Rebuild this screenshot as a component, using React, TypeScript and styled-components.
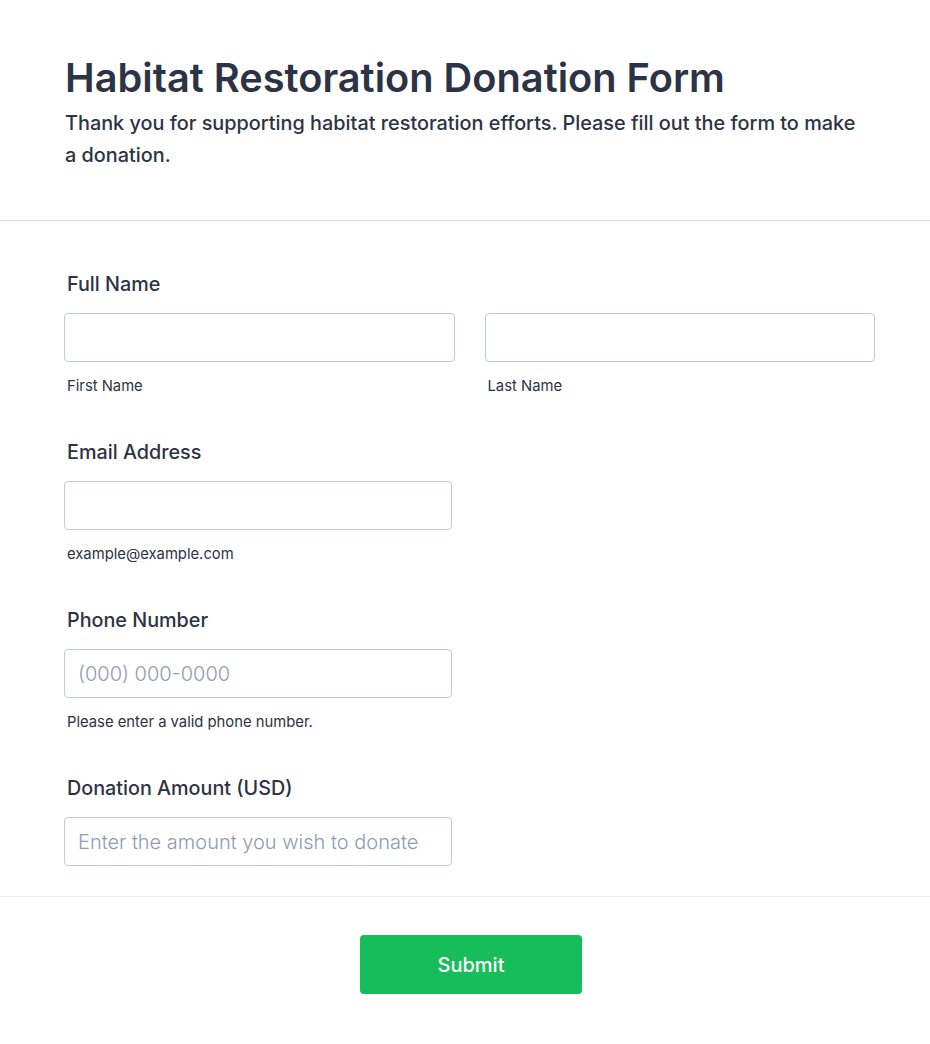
import styled, { createGlobalStyle } from 'styled-components';

const GlobalStyle = createGlobalStyle`
  * {
    box-sizing: border-box;
  }
  body {
    margin: 0;
    background: #ffffff;
    font-family: Inter, "Noto Sans", sans-serif;
    color: #2c3345;
  }
`;

// Styled components
const Page = styled.div`
  width: 930px;
  min-height: 1044px;
  background: #ffffff;
`;

const Header = styled.header`
  padding: 54px 55px 49px 65px;
  border-bottom: 1px solid #d8dae6;
`;

const Title = styled.h1`
  margin: 0;
  font-size: 39.75px;
  line-height: 48px;
  font-weight: 600;
  color: #2c3345;
`;

const Subtitle = styled.p`
  max-width: 798px;
  margin: 5px 0 0;
  font-size: 19.85px;
  line-height: 32px;
  font-weight: 500;
  color: #2c3345;
`;

const FormBody = styled.form`
  padding: 49px 55px 0 64px;
`;

const Field = styled.div<{ $last?: boolean }>`
  display: flex;
  flex-direction: column;
  margin-bottom: ${(p) => (p.$last ? '0' : '42px')};
`;

const Label = styled.label`
  margin: 0 0 15px 3px;
  font-size: 19.75px;
  line-height: 28px;
  font-weight: 500;
  color: #2c3345;
`;

const Row = styled.div`
  display: grid;
  grid-template-columns: 1fr 1fr;
  column-gap: 30px;
`;

const InputWrap = styled.div<{ $half?: boolean }>`
  display: flex;
  flex-direction: column;
  width: ${(p) => (p.$half ? '388px' : '100%')};
`;

const Input = styled.input`
  height: 49px;
  width: 100%;
  padding: 0 13px;
  border: 1px solid #c3cad8;
  border-radius: 4px;
  font-family: Inter, "Noto Sans", sans-serif;
  font-size: 20px;
  color: #2c3345;
  background: #ffffff;
  outline: none;

  &::placeholder {
    color: #8f9bb3;
    font-weight: 300;
  }
`;

const SubLabel = styled.span`
  margin: 14px 0 0 3px;
  font-size: 14.8px;
  line-height: 20px;
  color: #2c3345;
`;

const Footer = styled.div`
  margin-top: 30px;
  border-top: 1px solid #eaebf2;
  padding: 38px 0 50px 12px;
  display: flex;
  justify-content: center;
`;

const SubmitButton = styled.button`
  width: 222px;
  height: 59px;
  border: none;
  border-radius: 4px;
  background-color: #18bd5b;
  color: #ffffff;
  font-family: Inter, "Noto Sans", sans-serif;
  font-size: 20px;
  font-weight: 500;
  cursor: pointer;

  &:hover {
    background-color: #16aa52;
  }
`;

export default function App() {
  return (
    <Page>
      <GlobalStyle />
      <Header>
        <Title>Habitat Restoration Donation Form</Title>
        <Subtitle>
          Thank you for supporting habitat restoration efforts. Please fill out the form to make a
          donation.
        </Subtitle>
      </Header>
      <FormBody onSubmit={(e) => e.preventDefault()}>
        <Field>
          <Label>Full Name</Label>
          <Row>
            <InputWrap>
              <Input type="text" />
              <SubLabel>First Name</SubLabel>
            </InputWrap>
            <InputWrap>
              <Input type="text" />
              <SubLabel>Last Name</SubLabel>
            </InputWrap>
          </Row>
        </Field>
        <Field>
          <Label>Email Address</Label>
          <InputWrap $half>
            <Input type="email" />
            <SubLabel>example@example.com</SubLabel>
          </InputWrap>
        </Field>
        <Field>
          <Label>Phone Number</Label>
          <InputWrap $half>
            <Input type="tel" placeholder="(000) 000-0000" />
            <SubLabel>Please enter a valid phone number.</SubLabel>
          </InputWrap>
        </Field>
        <Field $last>
          <Label>Donation Amount (USD)</Label>
          <InputWrap $half>
            <Input type="number" placeholder="Enter the amount you wish to donate" />
          </InputWrap>
        </Field>
      </FormBody>
      <Footer>
        <SubmitButton type="submit">Submit</SubmitButton>
      </Footer>
    </Page>
  );
}
